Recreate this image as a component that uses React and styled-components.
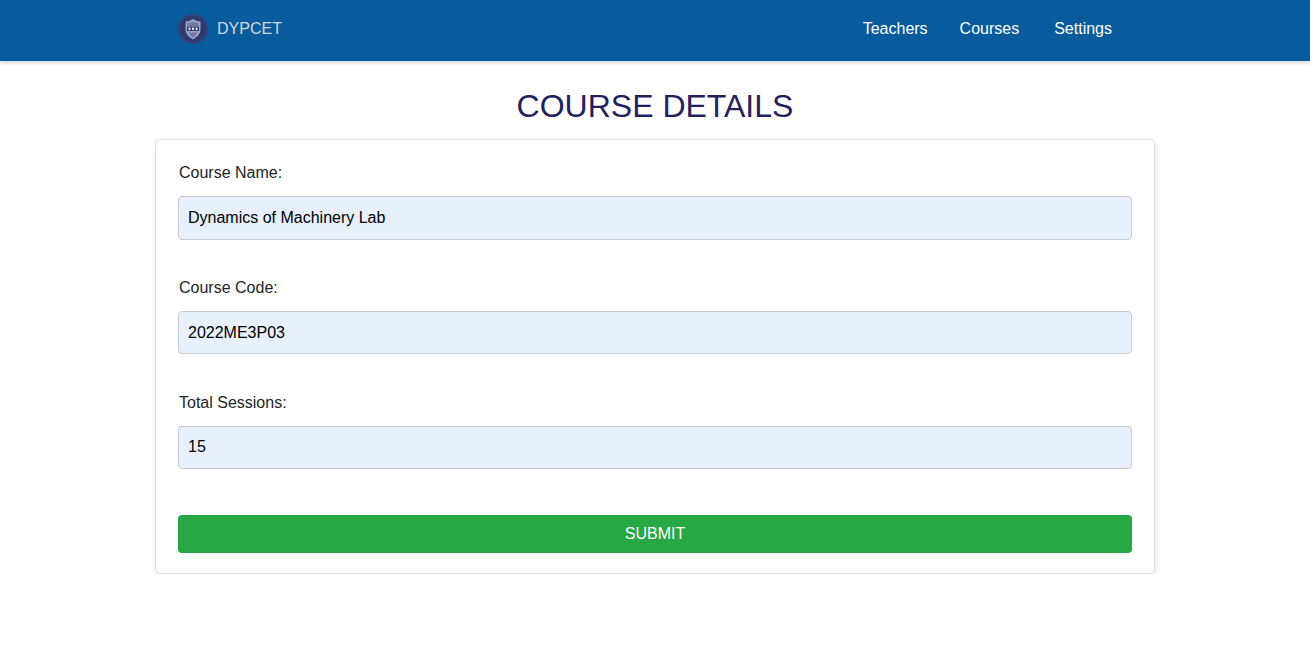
import React from 'react'
import styled, { createGlobalStyle } from 'styled-components'

const GlobalStyle = createGlobalStyle`
  html, body {
    margin: 0;
    padding: 0;
    background: #fff;
    font-family: "Liberation Sans", Arial, sans-serif;
  }
`

const Navbar = styled.nav`
  height: 61px;
  box-sizing: border-box;
  background: #085b9c;
  box-shadow: 0 2px 4px rgba(0, 0, 0, 0.16);
  display: flex;
  align-items: center;
  justify-content: space-between;
  padding: 0 198px 4px 178px;
`

const Brand = styled.a`
  display: flex;
  align-items: center;
  gap: 9px;
  color: #d3d8de;
  font-size: 16px;
`

const LogoMark = styled.svg`
  margin-top: 1px;
`

const NavLinks = styled.div`
  display: flex;
  align-items: center;
`

const NavLink = styled.a`
  color: #fff;
  font-size: 16px;
  margin-left: ${p => p.$gap}px;
`

const Title = styled.h1`
  margin: 0;
  padding-top: 27px;
  height: 78px;
  box-sizing: border-box;
  text-align: center;
  font-size: 32px;
  line-height: 37px;
  font-weight: 400;
  color: #241f5e;
`

const Card = styled.form`
  width: 1000px;
  height: 435px;
  box-sizing: border-box;
  margin: 0 auto;
  padding: 23px 22px 20px;
  background: #fff;
  border: 1px solid #dedede;
  border-radius: 5px;
  box-shadow: 1px 2px 6px rgba(0, 0, 0, 0.09);
  display: flex;
  flex-direction: column;
`

const Field = styled.div`
  margin-bottom: 38.2px;
`

const Label = styled.label`
  display: block;
  margin: 0 0 13.2px 1px;
  font-size: 16px;
  line-height: 20px;
  color: #212529;
`

const Input = styled.input`
  display: block;
  width: 100%;
  height: 43.4px;
  box-sizing: border-box;
  padding: 0 9px;
  background: #e8f0fe;
  border: 1px solid #c5c9d3;
  border-radius: 4px;
  font-family: inherit;
  font-size: 16px;
  color: #000;
  outline: none;
`

const SubmitButton = styled.button`
  width: 100%;
  height: 38px;
  margin-top: 7.6px;
  background: #28a745;
  border: none;
  border-radius: 4px;
  color: #fff;
  font-family: inherit;
  font-size: 16px;
`

const Logo = () => (
  <LogoMark width="30" height="30" viewBox="0 0 30 30">
    <circle cx="15" cy="15" r="15" fill="#2c3a70" />
    <circle cx="15" cy="15" r="14" fill="none" stroke="#3f4d85" strokeWidth="1" />
    <path d="M7.500 7.500 Q11 7.500 15 5 Q19 7.500 22.500 7.500 L22.500 16 Q22 21.500 15 25.500 Q8 21.500 7.500 16 Z" fill="#9aa3c2" />
    <path d="M9.500 9 Q12.500 9 15 7.500 Q17.500 9 20.500 9 L20.500 12 L9.500 12 Z" fill="#6f7aa3" />
    <rect x="9" y="12.500" width="12" height="4.500" fill="#2c3a70" />
    <rect x="10.500" y="13.500" width="2" height="2.500" fill="#dfe3ee" />
    <rect x="14" y="13.500" width="2" height="2.500" fill="#dfe3ee" />
    <rect x="17.500" y="13.500" width="2" height="2.500" fill="#dfe3ee" />
    <path d="M10.500 18.500 L19.500 18.500 Q18.500 21.500 15 23.500 Q11.500 21.500 10.500 18.500 Z" fill="#6f7aa3" />
  </LogoMark>
)

const fields = [
  { label: 'Course Name:', value: 'Dynamics of Machinery Lab' },
  { label: 'Course Code:', value: '2022ME3P03' },
  { label: 'Total Sessions:', value: '15' },
]

export default function App() {
  return (
    <>
      <GlobalStyle />
      <Navbar>
        <Brand>
          <Logo />
          DYPCET
        </Brand>
        <NavLinks>
          <NavLink $gap={0}>Teachers</NavLink>
          <NavLink $gap={32}>Courses</NavLink>
          <NavLink $gap={35}>Settings</NavLink>
        </NavLinks>
      </Navbar>
      <Title>COURSE DETAILS</Title>
      <Card onSubmit={e => e.preventDefault()}>
        {fields.map(f => (
          <Field key={f.label}>
            <Label>{f.label}</Label>
            <Input defaultValue={f.value} />
          </Field>
        ))}
        <SubmitButton>SUBMIT</SubmitButton>
      </Card>
    </>
  )
}
